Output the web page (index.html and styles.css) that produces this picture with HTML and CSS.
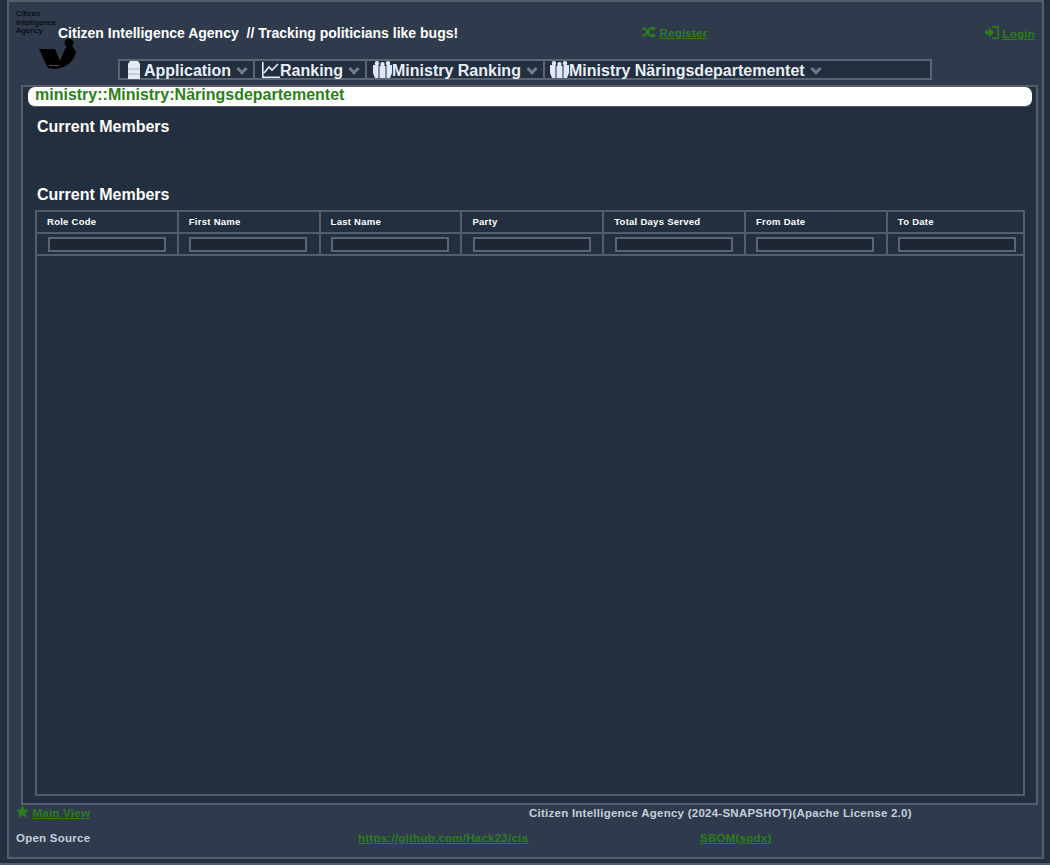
FILE: index.html
```html
<!DOCTYPE html>
<html>
	<head>
		<meta charset="utf-8" />
		<title>Citizen Intelligence Agency</title>
		<link rel="stylesheet" href="styles.css">
	</head>
	<body>
		<div class="page">
			<div class="top">
				<div class="logo">
					<div class="logo-text">Citizen<br>Intelligence<br>Agency</div>
					<svg class="logo-pic" width="40" height="32" viewBox="0 0 40 32">
						<circle cx="31" cy="5" r="4.5" fill="#000"/>
						<path fill="#000" d="M1 11 L17 11 L22 23 L27 11 L30 8 L35 9 L38 14 L36 20 L32 25 L26 29 L18 31 L10 30 L7 24 Z"/>
						<path stroke="#4a5260" d="M11 27.5 H21"/>
					</svg>
				</div>
				<div class="title">Citizen Intelligence Agency &nbsp;// Tracking politicians like bugs!</div>
				<div class="top-link reg">
					<svg class="ico" width="14" height="12" viewBox="0 0 14 12">
						<path fill="none" stroke="#2e7d1c" stroke-width="2" d="M0 2.5 H3 L8 9.5 H11 M0 9.5 H3 L8 2.5 H11"/>
						<path fill="#2e7d1c" d="M10.5 0 L14 2.5 L10.5 5 Z M10.5 7 L14 9.5 L10.5 12 Z"/>
					</svg>
					<a href="#">Register</a>
				</div>
				<div class="top-link">
					<svg class="ico" width="14" height="13" viewBox="0 0 14 13">
						<path fill="#2e7d1c" d="M0 4.5 H4 V1.5 L9 6.5 L4 11.5 V8.5 H0 Z"/>
						<path fill="none" stroke="#2e7d1c" stroke-width="1.5" d="M7 .8 H13.2 V12.2 H7"/>
					</svg>
					<a href="#">Login</a>
				</div>
			</div>

			<ul class="menu">
				<li class="m1">
					<svg width="14" height="18" viewBox="0 0 14 18">
						<path fill="#e4ebf5" d="M3 0 H11 L13 3 V18 H1 V3 Z"/>
						<path stroke="#9fb0c6" d="M1 8 H13 M1 13 H13"/>
					</svg>
					<span class="lbl">Application</span><i class="chev"></i>
				</li>
				<li class="m2">
					<svg width="18" height="16" viewBox="0 0 18 16">
						<path fill="none" stroke="#e4ebf5" stroke-width="1.6" d="M.8 0 V15.2 H18 M2 11 L7 5 L10 8 L16 2"/>
					</svg>
					<span class="lbl">Ranking</span><i class="chev"></i>
				</li>
				<li class="m3">
					<svg class="grp" width="19" height="17" viewBox="0 0 19 17">
						<path fill="#dfe8f4" d="M4 0 a2.200 2.200 0 0 1 0 4.400 a2.200 2.200 0 0 1 0 -4.400 M15 0 a2.200 2.200 0 0 1 0 4.400 a2.200 2.200 0 0 1 0 -4.400 M9.500 1 a2.200 2.200 0 0 1 0 4.400 a2.200 2.200 0 0 1 0 -4.400 M0 4 H5.500 V17 H2 L0 12 Z M13.500 4 H19 V12 L17 17 H13.500 Z M6.500 5 H12.500 V17 H6.500 Z"/>
					</svg>
					<span class="lbl">Ministry Ranking</span><i class="chev"></i>
				</li>
				<li class="m4">
					<svg class="grp" width="19" height="17" viewBox="0 0 19 17">
						<path fill="#dfe8f4" d="M4 0 a2.200 2.200 0 0 1 0 4.400 a2.200 2.200 0 0 1 0 -4.400 M15 0 a2.200 2.200 0 0 1 0 4.400 a2.200 2.200 0 0 1 0 -4.400 M9.500 1 a2.200 2.200 0 0 1 0 4.400 a2.200 2.200 0 0 1 0 -4.400 M0 4 H5.500 V17 H2 L0 12 Z M13.500 4 H19 V12 L17 17 H13.500 Z M6.500 5 H12.500 V17 H6.500 Z"/>
					</svg>
					<span class="lbl">Ministry Näringsdepartementet</span><i class="chev"></i>
				</li>
			</ul>

			<div class="content">
				<div class="crumb">ministry::Ministry:Näringsdepartementet</div>
				<h2 class="head first">Current Members</h2>
				<h2 class="head second">Current Members</h2>
				<table class="grid">
					<thead>
						<tr class="h-row">
							<th>Role Code</th>
							<th>First Name</th>
							<th>Last Name</th>
							<th>Party</th>
							<th>Total Days Served</th>
							<th>From Date</th>
							<th class="last">To Date</th>
						</tr>
						<tr class="f-row">
							<td><input type="text"></td>
							<td><input type="text"></td>
							<td><input type="text"></td>
							<td><input type="text"></td>
							<td><input type="text"></td>
							<td><input type="text"></td>
							<td><input type="text"></td>
						</tr>
					</thead>
					<tbody>
						<tr class="empty"><td colspan="7"></td></tr>
					</tbody>
				</table>
			</div>

			<div class="foot row-a">
				<div>
					<svg class="ico" width="13" height="13" viewBox="0 0 13 13">
						<path fill="#2e7d1c" d="M6.5 0 L8.500 4.400 L13 4.900 L9.600 8 L10.600 12.800 L6.500 10.300 L2.400 12.800 L3.400 8 L0 4.900 L4.500 4.400 Z"/>
					</svg>
					<a href="#">Main View</a>
				</div>
				<div>Citizen Intelligence Agency (2024-SNAPSHOT)(Apache License 2.0)</div>
			</div>
			<div class="foot row-b">
				<div>Open Source</div>
				<div><a href="#">https://github.com/Hack23/cia</a></div>
				<div><a href="#">SBOM(spdx)</a></div>
			</div>
		</div>
	</body>
</html>
```

FILE: styles.css
```css
*{
	margin: 0;
	padding: 0;
	list-style: none;
	box-sizing: border-box;
}

html,body{
	height: 865px;
	overflow: hidden;
}

body{
	background-color: #232e3e;
	font-family: "Liberation Sans", Arial, sans-serif;
	color: #fff;
	border-bottom: 2px solid #545d6b;
}

a{
	color: #2e7d1c;
	font-weight: bold;
}

.page{
	width: 1037px;
	height: 859px;
	margin-left: 7px;
	border: 2px solid #545d6b;
	background-color: #2f3b4d;
}

.top{
	display: flex;
	height: 57px;
	padding-left: 7px;
}

.logo{
	width: 42px;
	padding-top: 8px;
	color: #000;
}

.logo-text{
	font-size: 8px;
	line-height: 8.500px;
	white-space: nowrap;
}

.logo-pic{
	display: block;
	margin: 2px 0 0 22px;
}

.title{
	width: 584px;
	padding-top: 23px;
	font-size: 14px;
	line-height: 16px;
	font-weight: bold;
	white-space: nowrap;
}

.top-link{
	padding-top: 24px;
	font-size: 11.500px;
	letter-spacing: 0.25px;
	line-height: 14px;
	white-space: nowrap;
}

.reg{
	width: 343px;
}

.ico{
	vertical-align: -1px;
}

.menu{
	display: flex;
	width: 814px;
	height: 21px;
	margin-left: 109px;
	border: 2px solid #5c6573;
	background-color: #232e3e;
	font-size: 16px;
	font-weight: bold;
	color: #e8eef7;
}

.menu li{
	display: flex;
	align-items: center;
	height: 17px;
	padding-left: 7px;
	border-right: 2px solid #5c6573;
	white-space: nowrap;
}

.menu svg{
	flex: none;
}

.lbl{
	margin-top: 2px;
}

.m1{
	width: 135px;
}

.m1 .lbl{
	margin-left: 3px;
}

.m2{
	width: 112px;
}

.menu .m3{
	width: 178px;
	padding-left: 6px;
}

.menu .m4{
	border-right: 0;
	padding-left: 5px;
}

.chev{
	width: 8px;
	height: 8px;
	margin: -2px 0 0 7px;
	border-right: 3px solid #727a88;
	border-bottom: 3px solid #727a88;
	transform: rotate(45deg);
}

.content{
	width: 1017px;
	height: 720px;
	margin: 5px 0 0 12px;
	padding: 0 4px 0 5px;
	border: 2px solid #545d6b;
	background-color: #232e3e;
}

.crumb{
	height: 20px;
	border-radius: 7px;
	background-color: #fff;
	border-bottom: 1px solid #545d6b;
	padding-left: 7px;
	color: #2e7d1c;
	font-size: 16px;
	line-height: 15px;
	font-weight: bold;
}

.head{
	font-size: 16px;
	line-height: 18px;
	font-weight: bold;
	padding-left: 9px;
}

.first{
	margin-top: 11px;
}

.second{
	margin-top: 50px;
}

.grid{
	width: 990px;
	height: 586px;
	margin: 6px 0 0 7px;
	border-collapse: collapse;
	table-layout: fixed;
}

.grid th,.grid td{
	border: 2px solid #545d6b;
}

.grid th{
	width: 141.800px;
	height: 22px;
	padding: 0 0 2px 10px;
	text-align: left;
	font-size: 9.500px;
	letter-spacing: 0.27px;
}

.grid th.last{
	width: auto;
}

.f-row td{
	height: 22px;
	padding: 0 0 0 10.500px;
}

.f-row input{
	display: block;
	width: 118px;
	height: 15px;
	border: 2px solid #5c6573;
	background-color: #1f2633;
}

.foot{
	display: grid;
	padding-left: 7px;
	font-size: 11.500px;
	letter-spacing: 0.25px;
	font-weight: bold;
	color: #c5cedb;
}

.row-a{
	grid-template-columns: 513px 1fr;
	line-height: 16px;
}

.row-b{
	grid-template-columns: 342px 342px 1fr;
	margin-top: 9px;
	line-height: 16px;
}
```
